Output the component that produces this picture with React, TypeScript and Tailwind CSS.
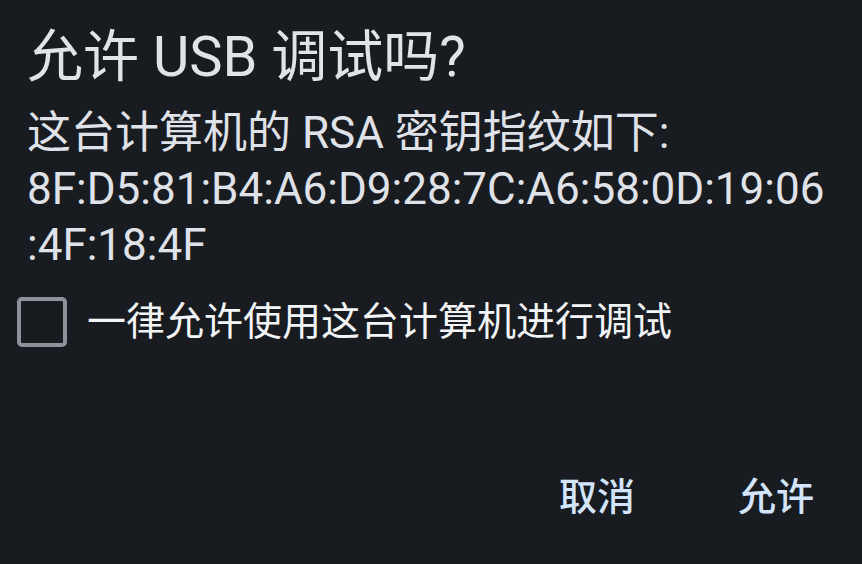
import React from "react";

export default function App() {
  return (
    <div
      className="w-[862px] h-[564px] bg-[#181c21] flex flex-col overflow-hidden"
      style={{ fontFamily: 'Roboto, "Noto Sans CJK SC", sans-serif' }}
    >
      <div className="pl-[27px] pt-[25px] text-[56px] leading-[64px] text-[#e2e2e9] whitespace-nowrap">
        允许 USB 调试吗?
      </div>
      <div className="pl-[27px] mt-[16px] text-[44px] leading-[56px] text-[#e0e2ea] whitespace-nowrap">
        <div>这台计算机的 RSA 密钥指纹如下:</div>
        <div>8F:D5:81:B4:A6:D9:28:7C:A6:58:0D:19:06</div>
        <div>:4F:18:4F</div>
      </div>
      <div className="mt-[24px] pl-[17px] flex items-center h-[50px]">
        <div className="w-[50px] h-[50px] rounded-[5px] border-[4px] border-[#8e9199]" />
        <div className="ml-[20px] text-[39px] leading-[50px] text-[#f4f5f8] whitespace-nowrap">
          一律允许使用这台计算机进行调试
        </div>
      </div>
      <div className="flex-1" />
      <div className="flex justify-end items-center pr-[48px] mb-[43px] text-[38px] leading-[48px] font-medium text-[#d3e4ff]">
        <div>取消</div>
        <div className="ml-[103px]">允许</div>
      </div>
    </div>
  );
}
